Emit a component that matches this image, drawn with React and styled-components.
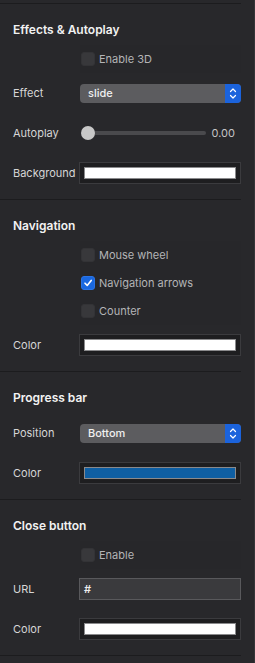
import React from 'react'
import styled, {createGlobalStyle} from 'styled-components'

const Global = createGlobalStyle`
  html, body {
    margin: 0;
    padding: 0;
    background-color: #28282b;
  }
  body {
    font-family: 'Inter', 'Liberation Sans', sans-serif;
    -webkit-font-smoothing: antialiased;
  }
`
const Frame = styled.div`
  width: 254px;
  min-height: 663px;
  padding-top: 3px;
  border-right: 1px solid #353538;
  background-color: #28282b;
`
const Panel = styled.div`
  width: 241px;
  border-top: 1px solid #1c1c1e;
`
const Section = styled.div`
  display: flex;
  flex-direction: column;
  padding: 18px 0 6px 13px;
  border-bottom: 1px solid #1c1c1e;
`
const Heading = styled.div`
  height: 16px;
  line-height: 16px;
  margin-bottom: 7px;
  font-size: 12px;
  font-weight: 600;
  color: #f2f2f2;
`
const Row = styled.div`
  display: grid;
  grid-template-columns: 66px 1fr;
  align-items: center;
  height: ${(props) => props.check ? '28px' : '40px'};
`
const Label = styled.div`
  font-size: 11px;
  color: #d6d6d6;
`
const CheckGroup = styled.div`
  grid-column: 2;
  display: flex;
  flex-direction: column;
  margin-left: 1px;
  background-color: #27272a;
`
const CheckRow = styled.label`
  display: flex;
  align-items: center;
  gap: 4px;
  height: 28px;
  padding-left: 1px;
  font-size: 11px;
  color: #b4b4b6;
`
const Box = styled.span`
  width: 14px;
  height: 14px;
  box-sizing: border-box;
  border-radius: 3px;
  display: flex;
  align-items: center;
  justify-content: center;
  background-color: ${(props) => props.checked ? '#1a68e0' : '#38383b'};
  border: 1px solid ${(props) => props.checked ? '#2a74e6' : '#333336'};
`
const Select = styled.div`
  display: flex;
  align-items: center;
  height: 19px;
  margin-left: 1px;
  border-radius: 4px;
  overflow: hidden;
  background-color: #5c5c5f;
`
const SelectText = styled.span`
  flex: 1;
  padding-left: 8px;
  font-size: 11px;
  font-weight: 500;
  color: #f0f0f0;
`
const Stepper = styled.span`
  width: 16px;
  height: 19px;
  display: flex;
  align-items: center;
  justify-content: center;
  background-color: #1b63dc;
`
const SliderWrap = styled.div`
  display: flex;
  align-items: center;
  margin-left: 3px;
`
const Track = styled.div`
  position: relative;
  width: 124px;
  height: 4px;
  border-radius: 2px;
  background-color: #4a4a4d;
`
const Thumb = styled.div`
  position: absolute;
  left: -1px;
  top: -5px;
  width: 14px;
  height: 14px;
  border-radius: 50%;
  background-color: #c8c8c8;
`
const Value = styled.span`
  margin-left: auto;
  margin-right: 6px;
  font-size: 11px;
  color: #c4c4c6;
`
const ColorBox = styled.div`
  height: 22px;
  box-sizing: border-box;
  padding: 4px;
  border: 1px solid #3b3b3e;
  background-color: #1e1e20;
`
const Swatch = styled.div`
  height: 12px;
  box-sizing: border-box;
  border: 1px solid #8a8a8c;
  background-color: ${(props) => props.color};
`
const TextInput = styled.div`
  height: 22px;
  box-sizing: border-box;
  padding-left: 4px;
  display: flex;
  align-items: center;
  border: 1px solid #59595c;
  background-color: #3a3a3d;
  font-size: 11px;
  font-weight: 600;
  color: #ececec;
`

const Check = ({checked, children}) => (
  <CheckRow>
    <Box checked={checked}>
      {checked && (
        <svg width="10" height="10" viewBox="0 0 10 10">
          <path d="M2 5.2 L4.2 7.4 L8.2 2.4" fill="none" stroke="#fff" strokeWidth="1.6" strokeLinecap="round" strokeLinejoin="round"/>
        </svg>
      )}
    </Box>
    {children}
  </CheckRow>
)

const Dropdown = ({value}) => (
  <Select>
    <SelectText>{value}</SelectText>
    <Stepper>
      <svg width="8" height="13" viewBox="0 0 8 13">
        <path d="M1.5 4.5 L4 2 L6.5 4.5 M1.5 8.5 L4 11 L6.5 8.5" fill="none" stroke="#fff" strokeWidth="1.2" strokeLinecap="round" strokeLinejoin="round"/>
      </svg>
    </Stepper>
  </Select>
)

const Color = ({label, color}) => (
  <Row>
    <Label>{label}</Label>
    <ColorBox><Swatch color={color}/></ColorBox>
  </Row>
)

export default function App() {
  return (
    <Frame>
      <Global/>
      <Panel>
        <Section>
          <Heading>Effects &amp; Autoplay</Heading>
          <Row check>
            <CheckGroup><Check>Enable 3D</Check></CheckGroup>
          </Row>
          <Row>
            <Label>Effect</Label>
            <Dropdown value="slide"/>
          </Row>
          <Row>
            <Label>Autoplay</Label>
            <SliderWrap>
              <Track><Thumb/></Track>
              <Value>0.00</Value>
            </SliderWrap>
          </Row>
          <Color label="Background" color="#ffffff"/>
        </Section>
        <Section>
          <Heading>Navigation</Heading>
          <Row style={{height: '84px'}}>
            <CheckGroup>
              <Check>Mouse wheel</Check>
              <Check checked>Navigation arrows</Check>
              <Check>Counter</Check>
            </CheckGroup>
          </Row>
          <Color label="Color" color="#ffffff"/>
        </Section>
        <Section>
          <Heading>Progress bar</Heading>
          <Row>
            <Label>Position</Label>
            <Dropdown value="Bottom"/>
          </Row>
          <Color label="Color" color="#0f5fa3"/>
        </Section>
        <Section>
          <Heading>Close button</Heading>
          <Row check>
            <CheckGroup><Check>Enable</Check></CheckGroup>
          </Row>
          <Row>
            <Label>URL</Label>
            <TextInput>#</TextInput>
          </Row>
          <Color label="Color" color="#ffffff"/>
        </Section>
      </Panel>
    </Frame>
  )
}
